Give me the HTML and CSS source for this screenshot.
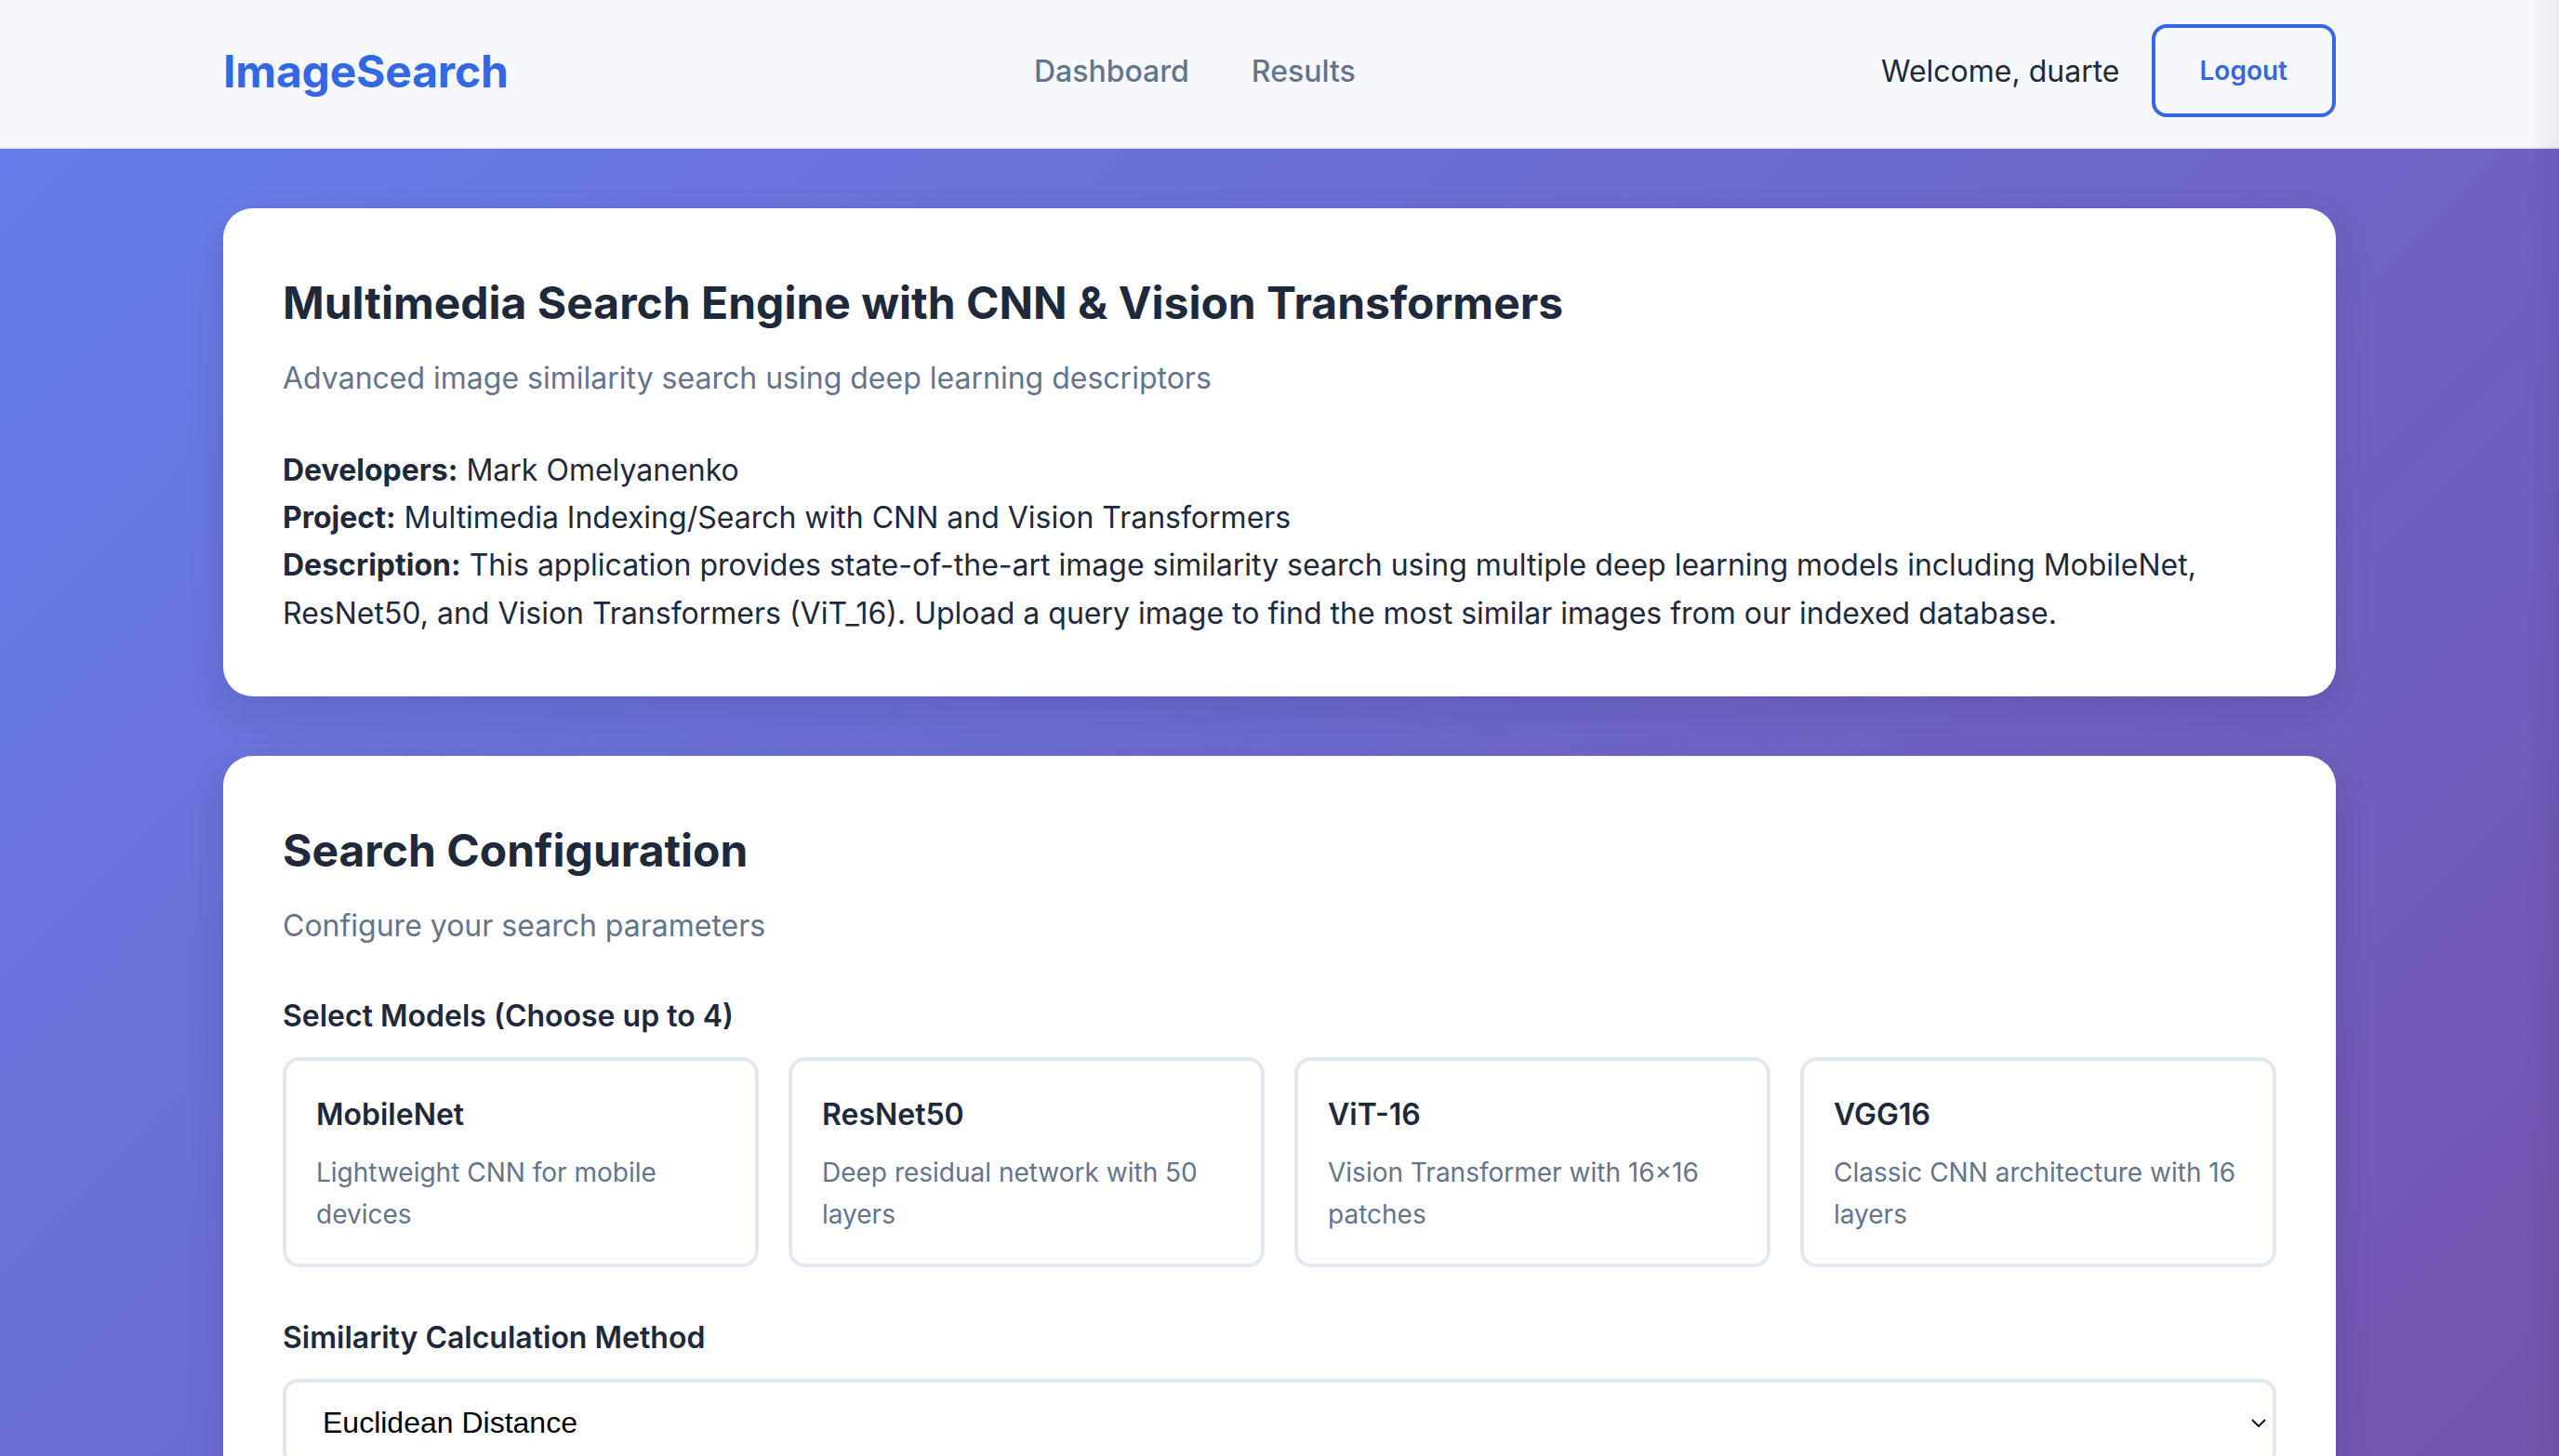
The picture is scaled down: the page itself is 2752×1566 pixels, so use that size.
FILE: index.html
```html
<!DOCTYPE html>
<html lang="en">
<head>
<meta charset="utf-8">
<title>ImageSearch</title>
<link rel="stylesheet" href="styles.css">
</head>
<body>
<div class="page">
  <header class="topbar">
    <div class="topbar-inner">
      <a class="brand" href="#">ImageSearch</a>
      <nav class="nav">
        <a class="nav-link" href="#">Dashboard</a>
        <a class="nav-link" href="#">Results</a>
      </nav>
      <div class="user">
        <span class="welcome">Welcome, duarte</span>
        <button class="logout" type="button">Logout</button>
      </div>
    </div>
  </header>

  <main class="main">
    <section class="card">
      <h1 class="card-title">Multimedia Search Engine with CNN &amp; Vision Transformers</h1>
      <p class="card-subtitle">Advanced image similarity search using deep learning descriptors</p>
      <div class="info">
        <p><strong>Developers:</strong> Mark Omelyanenko</p>
        <p><strong>Project:</strong> Multimedia Indexing/Search with CNN and Vision Transformers</p>
        <p><strong>Description:</strong> This application provides state-of-the-art image similarity search using multiple deep learning models including MobileNet, ResNet50, and Vision Transformers (ViT_16). Upload a query image to find the most similar images from our indexed database.</p>
      </div>
    </section>

    <section class="card">
      <h2 class="card-title">Search Configuration</h2>
      <p class="card-subtitle">Configure your search parameters</p>

      <div class="field">
        <div class="field-label">Select Models (Choose up to 4)</div>
        <div class="model-grid">
          <div class="model">
            <div class="model-name">MobileNet</div>
            <div class="model-desc">Lightweight CNN for mobile devices</div>
          </div>
          <div class="model">
            <div class="model-name">ResNet50</div>
            <div class="model-desc">Deep residual network with 50 layers</div>
          </div>
          <div class="model">
            <div class="model-name">ViT-16</div>
            <div class="model-desc">Vision Transformer with 16×16 patches</div>
          </div>
          <div class="model">
            <div class="model-name">VGG16</div>
            <div class="model-desc">Classic CNN architecture with 16 layers</div>
          </div>
        </div>
      </div>

      <div class="field">
        <label class="field-label" for="method">Similarity Calculation Method</label>
        <div class="select-wrap">
          <select class="select" id="method">
            <option>Euclidean Distance</option>
            <option>Cosine Similarity</option>
          </select>
          <svg class="chevron" viewBox="0 0 16 9" width="16" height="9" aria-hidden="true">
            <path d="M1 1 L8 8 L15 1" fill="none" stroke="#111" stroke-width="2"/>
          </svg>
        </div>
      </div>
    </section>
  </main>
  <div class="edge-shade"></div>
</div>
</body>
</html>
```

FILE: styles.css
```css
* {
  box-sizing: border-box;
}

html, body {
  margin: 0;
  padding: 0;
}

body {
  font-family: Inter, "Noto Sans", "Liberation Sans", sans-serif;
  color: #1e293b;
}

.page {
  min-height: 2500px;
  background: linear-gradient(135deg, #667eea 0%, #764ba2 100%);
}

/* Header */
.topbar {
  background: #f7f8fc;
  border-bottom: 2px solid #e4e7ee;
  padding: 26px 0 32px;
}

.topbar-inner {
  max-width: 2400px;
  margin: 0 auto;
  padding: 0 64px;
  display: flex;
  align-items: center;
  justify-content: space-between;
}

.brand {
  font-size: 48px;
  font-weight: 700;
  color: #3467e4;
  text-decoration: none;
  letter-spacing: -0.2px;
}

.nav {
  display: flex;
  gap: 67px;
}

.nav-link {
  font-size: 32px;
  font-weight: 500;
  color: #64748b;
  text-decoration: none;
}

.user {
  display: flex;
  align-items: center;
  gap: 34px;
}

.welcome {
  font-size: 32px;
  color: #1e293b;
}

.logout {
  height: 100px;
  padding: 0 48px;
  border: 4px solid #3467e4;
  border-radius: 16px;
  background: transparent;
  color: #3467e4;
  font-family: Inter, "Noto Sans", sans-serif;
  font-size: 28px;
  font-weight: 600;
}

/* Main */
.main {
  max-width: 2400px;
  margin: 0 auto;
  padding: 64px 64px;
}

.card {
  background: #ffffff;
  border-radius: 32px;
  padding: 64px;
  margin-bottom: 64px;
  box-shadow: 0 16px 40px rgba(30, 20, 80, 0.12);
}

.card-title {
  margin: 0;
  font-size: 48px;
  line-height: 1.6;
  font-weight: 700;
  color: #1e293b;
}

.card-subtitle {
  margin: 16px 0 48px;
  font-size: 32px;
  line-height: 1.6;
  color: #64748b;
}

.info p {
  margin: 0;
  font-size: 32px;
  line-height: 1.6;
  color: #1e293b;
}

.info strong {
  font-weight: 700;
}

/* Fields */
.field {
  margin-bottom: 52px;
}

.field-label {
  display: block;
  font-size: 32px;
  line-height: 1.5;
  font-weight: 600;
  color: #1e293b;
  margin-bottom: 20px;
}

.model-grid {
  display: grid;
  grid-template-columns: repeat(4, 1fr);
  gap: 32px;
}

.model {
  border: 4px solid #e2e8f0;
  border-radius: 18px;
  padding: 34px 32px 31px;
  background: #ffffff;
}

.model-name {
  font-size: 32px;
  line-height: 1.5;
  font-weight: 600;
  color: #1e293b;
  margin-bottom: 16px;
}

.model-desc {
  font-size: 28px;
  line-height: 1.6;
  color: #64748b;
}

.select-wrap {
  position: relative;
}

.select {
  display: block;
  width: 100%;
  appearance: none;
  -webkit-appearance: none;
  border: 4px solid #e2e8f0;
  border-radius: 16px;
  background: #ffffff;
  padding: 25px 60px 25px 39px;
  font-family: "Liberation Sans", Arial, sans-serif;
  font-size: 32px;
  color: #000000;
}

.chevron {
  position: absolute;
  right: 11px;
  top: 43px;
  pointer-events: none;
}

.edge-shade {
  position: fixed;
  top: 0;
  right: 0;
  width: 34px;
  height: 100vh;
  background: linear-gradient(90deg, rgba(0, 0, 0, 0) 0%, rgba(0, 0, 0, 0.05) 100%);
  pointer-events: none;
}
```
